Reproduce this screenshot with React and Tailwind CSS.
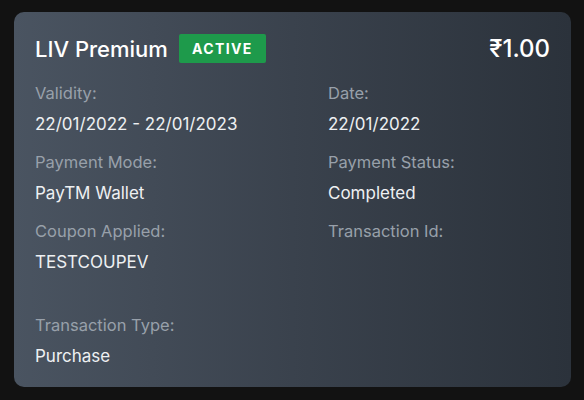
export default function App() {
  const Field = ({ label, value, className = "" }) => (
    <div className={`flex flex-col ${className}`}>
      <span className="text-[16.5px] leading-[20px] text-[#98a0aa]">{label}</span>
      <span className="mt-[11px] text-[17px] leading-[20px] text-[#eef0f2]">{value}</span>
    </div>
  );

  return (
    <div
      className="w-[584px] h-[400px] bg-[#121212] pt-[12px] pl-[14px]"
      style={{ fontFamily: "Inter, 'Noto Sans', sans-serif" }}
    >
      <div className="w-[557px] h-[375px] rounded-[10px] bg-gradient-to-r from-[#4a5461] via-[#3a424d] to-[#2b323b] px-[21px] pt-[22px]">
        <div className="flex items-center justify-between">
          <div className="flex items-center gap-[11px]">
            <span className="text-[22px] leading-[28px] font-medium text-white">LIV Premium</span>
            <span className="bg-[#1e9a4b] rounded-[2px] px-[13px] h-[29px] flex items-center text-[14px] font-bold tracking-[1.4px] text-white">
              ACTIVE
            </span>
          </div>
          <span className="text-[24px] leading-[28px] font-medium text-white">₹1.00</span>
        </div>
        <div className="grid grid-cols-[293px_1fr] mt-[20px] gap-y-[18px]">
          <Field label="Validity:" value="22/01/2022 - 22/01/2023" />
          <Field label="Date:" value="22/01/2022" />
          <Field label="Payment Mode:" value="PayTM Wallet" />
          <Field label="Payment Status:" value="Completed" />
          <Field label="Coupon Applied:" value="TESTCOUPEV" />
          <div className="flex flex-col">
            <span className="text-[16.5px] leading-[20px] text-[#98a0aa]">Transaction Id:</span>
            <span className="h-[64px]"></span>
          </div>
          <Field label="Transaction Type:" value="Purchase" className="-mt-[8px]" />
        </div>
      </div>
    </div>
  );
}
